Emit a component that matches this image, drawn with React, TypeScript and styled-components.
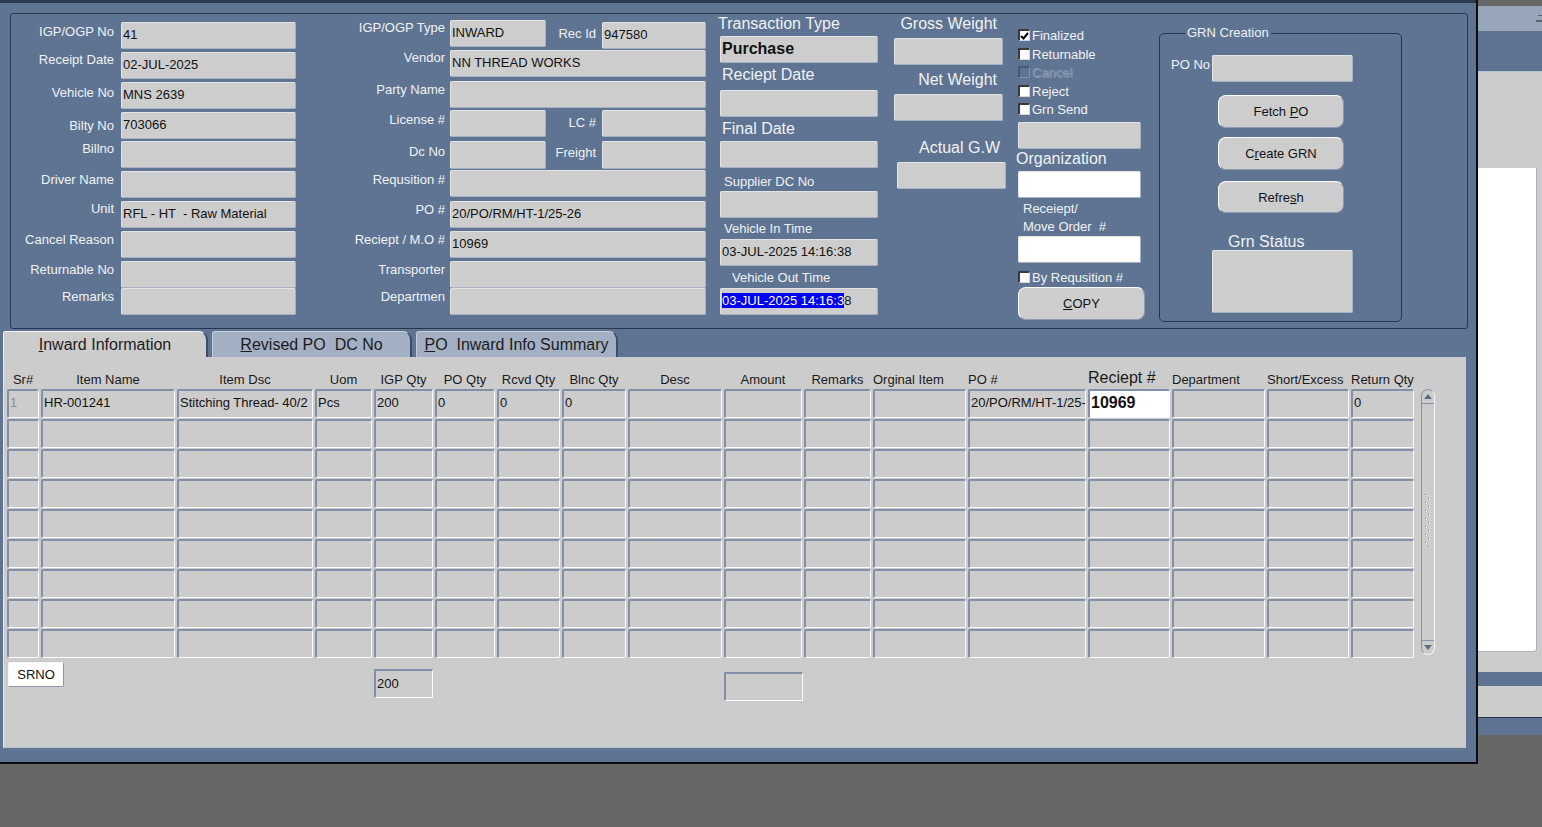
import React from 'react';
import styled, { createGlobalStyle } from 'styled-components';

const BLUE = '#5f7493';
const GRAY = '#cccccc';
const INK = '#121212';
const LIGHT = '#f1f2f4';

const GlobalStyle = createGlobalStyle`
  html, body { margin: 0; padding: 0; background: #676767; }
  body { font-family: 'Liberation Sans', Arial, sans-serif; font-size: 13px; overflow: hidden; }
  * { box-sizing: border-box; }
`;

const leftRows = [
  { label: 'IGP/OGP No', value: '41', h: 30, dy: 2 },
  { label: 'Receipt Date', value: '02-JUL-2025', h: 30, dy: 0 },
  { label: 'Vehicle No', value: 'MNS 2639', h: 30, dy: 3 },
  { label: 'Bilty No', value: '703066', h: 29, dy: 6 },
  { label: 'Billno', value: '', h: 30, dy: 0 },
  { label: 'Driver Name', value: '', h: 30, dy: 1 },
  { label: 'Unit', value: 'RFL - HT  - Raw Material', h: 30, dy: 0 },
  { label: 'Cancel Reason', value: '', h: 30, dy: 1 },
  { label: 'Returnable No', value: '', h: 27, dy: 1 },
  { label: 'Remarks', value: '', h: 28, dy: 1 },
];

const midRows = [
  { label: 'Requsition #', value: '', h: 31, dy: 2 },
  { label: 'PO #', value: '20/PO/RM/HT-1/25-26', h: 30, dy: 1 },
  { label: 'Reciept / M.O #', value: '10969', h: 30, dy: 1 },
  { label: 'Transporter', value: '', h: 27, dy: 1 },
  { label: 'Departmen', value: '', h: 28, dy: 1 },
];

const checks = [
  { label: 'Finalized', checked: true },
  { label: 'Returnable' },
  { label: 'Cancel', off: true },
  { label: 'Reject' },
  { label: 'Grn Send' },
];

type Col = { name: string; w: number; align: 'center' | 'left'; big?: boolean };

const cols: Col[] = [
  { name: 'Sr#', w: 34, align: 'center' },
  { name: 'Item Name', w: 136, align: 'center' },
  { name: 'Item Dsc', w: 138, align: 'center' },
  { name: 'Uom', w: 59, align: 'center' },
  { name: 'IGP Qty', w: 61, align: 'center' },
  { name: 'PO Qty', w: 62, align: 'center' },
  { name: 'Rcvd Qty', w: 65, align: 'center' },
  { name: 'Blnc Qty', w: 66, align: 'center' },
  { name: 'Desc', w: 96, align: 'center' },
  { name: 'Amount', w: 80, align: 'center' },
  { name: 'Remarks', w: 69, align: 'center' },
  { name: 'Orginal Item', w: 95, align: 'left' },
  { name: 'PO #', w: 120, align: 'left' },
  { name: 'Reciept #', w: 84, align: 'left', big: true },
  { name: 'Department', w: 95, align: 'left' },
  { name: 'Short/Excess', w: 84, align: 'left' },
  { name: 'Return Qty', w: 65, align: 'left' },
];

const firstRow = ['1', 'HR-001241', 'Stitching Thread- 40/2', 'Pcs', '200', '0', '0', '0', '', '', '', '', '20/PO/RM/HT-1/25-26', '10969', '', '', '0'];
const RECEIPT_COL = 13;
const template = cols.map((c) => `${c.w}px`).join(' ');

const Screen = styled.div`
  display: flex;
  width: 1542px;
  height: 827px;
  background: #676767;
`;

const Window = styled.div`
  width: 1478px;
  height: 764px;
  flex-shrink: 0;
  display: flex;
  flex-direction: column;
  background: ${BLUE};
  border-right: 2px solid #0c0c0c;
  border-bottom: 2px solid #0c0c0c;
`;

const TitleStrip = styled.div`
  height: 3px;
  background: #2c3a51;
`;

const TopFrame = styled.div`
  margin: 10px 0 0 10px;
  width: 1458px;
  height: 316px;
  flex-shrink: 0;
  display: flex;
  align-items: flex-start;
  border: 1px solid #27364f;
  border-radius: 3px;
`;

const Column = styled.div<{ $w: number; $ml?: number; $pt?: number; $pl?: number }>`
  width: ${(p) => p.$w}px;
  margin-left: ${(p) => p.$ml ?? 0}px;
  padding-top: ${(p) => p.$pt ?? 0}px;
  padding-left: ${(p) => p.$pl ?? 0}px;
  flex-shrink: 0;
  display: flex;
  flex-direction: column;
`;

const FormRow = styled.div<{ $h: number }>`
  height: ${(p) => p.$h}px;
  display: flex;
  align-items: flex-start;
`;

const Label = styled.div<{ $w: number; $dy?: number; $gap?: number }>`
  width: ${(p) => p.$w}px;
  margin-right: ${(p) => p.$gap ?? 0}px;
  padding-top: ${(p) => p.$dy ?? 1}px;
  flex-shrink: 0;
  text-align: right;
  color: ${LIGHT};
  font-size: 13px;
  line-height: 16px;
  white-space: nowrap;
`;

const TopLabel = styled.div<{ $h: number; $pt: number; $size?: number; $lh?: number; $indent?: number; $right?: number }>`
  height: ${(p) => p.$h}px;
  padding-top: ${(p) => p.$pt}px;
  padding-left: ${(p) => p.$indent ?? 0}px;
  padding-right: ${(p) => p.$right ?? 0}px;
  text-align: ${(p) => (p.$right !== undefined ? 'right' : 'left')};
  color: ${LIGHT};
  font-size: ${(p) => p.$size ?? 16}px;
  line-height: ${(p) => p.$lh ?? ((p.$size ?? 16) === 13 ? 16 : 18)}px;
  white-space: pre;
  flex-shrink: 0;
`;

const Field = styled.div<{ $w: number; $h?: number; $white?: boolean; $big?: boolean; $mt?: number; $ml?: number }>`
  width: ${(p) => p.$w}px;
  height: ${(p) => p.$h ?? 27}px;
  margin-top: ${(p) => p.$mt ?? 0}px;
  margin-left: ${(p) => p.$ml ?? 0}px;
  flex-shrink: 0;
  background: ${(p) => (p.$white ? '#ffffff' : '#cdcdcd')};
  border: 1px solid;
  border-color: #e3e3e3 #a6b1c1 #a6b1c1 #e3e3e3;
  border-radius: 2px;
  padding: ${(p) => (p.$big ? '3px 1px 0' : '4px 1px 0')};
  font-size: ${(p) => (p.$big ? 16 : 13)}px;
  font-weight: ${(p) => (p.$big ? 700 : 400)};
  line-height: ${(p) => (p.$big ? 18 : 16)}px;
  color: ${INK};
  white-space: pre;
  overflow: hidden;
`;

const Selected = styled.span`
  background: #0000f2;
  color: #ffffff;
`;

const CheckRow = styled.div<{ $h: number; $mt?: number }>`
  height: ${(p) => p.$h}px;
  margin-top: ${(p) => p.$mt ?? 0}px;
  padding-left: 2px;
  display: flex;
  align-items: flex-start;
  font-size: 13px;
  line-height: 16px;
`;

const Box = styled.span<{ $off?: boolean }>`
  width: 12px;
  height: 12px;
  margin: 1px 2px 0 0;
  flex-shrink: 0;
  display: flex;
  align-items: center;
  justify-content: center;
  background: ${(p) => (p.$off ? 'transparent' : '#ffffff')};
  border: 1px solid;
  border-width: 2px 1px 1px 2px;
  border-color: ${(p) => (p.$off ? '#475877 #8393aa #8393aa #475877' : '#3a3a3a #d6d6d6 #d6d6d6 #3a3a3a')};
`;

const CheckText = styled.span<{ $off?: boolean }>`
  color: ${(p) => (p.$off ? '#8796ad' : LIGHT)};
  text-shadow: ${(p) => (p.$off ? '1px 1px 0 rgba(255,255,255,0.22)' : 'none')};
`;

const Button = styled.div<{ $w: number; $h: number; $mt?: number; $ml?: number }>`
  width: ${(p) => p.$w}px;
  height: ${(p) => p.$h}px;
  margin-top: ${(p) => p.$mt ?? 0}px;
  margin-left: ${(p) => p.$ml ?? 0}px;
  flex-shrink: 0;
  display: flex;
  align-items: center;
  justify-content: center;
  background: #cdcdcd;
  border: 1px solid;
  border-color: #ffffff #8e9bb0 #8e9bb0 #ffffff;
  border-radius: 8px;
  color: ${INK};
  font-size: 13px;
`;

const GrnBox = styled.div`
  position: relative;
  margin: 19px 0 0 13px;
  width: 243px;
  height: 289px;
  flex-shrink: 0;
  padding: 21px 0 0 11px;
  display: flex;
  flex-direction: column;
  border: 1px solid #27364f;
  border-radius: 5px;
`;

const Legend = styled.span`
  position: absolute;
  top: -9px;
  left: 25px;
  padding: 0 2px;
  background: ${BLUE};
  color: ${LIGHT};
  font-size: 13px;
  line-height: 16px;
`;

const TabBar = styled.div`
  margin: 2px 0 0 3px;
  height: 26px;
  display: flex;
`;

const Tab = styled.div<{ $w: number; $active?: boolean }>`
  width: ${(p) => p.$w}px;
  height: 26px;
  margin-right: 4px;
  padding-top: 4px;
  background: ${(p) => (p.$active ? GRAY : '#a3b0c3')};
  border-top: 1px solid ${(p) => (p.$active ? '#f2f2f2' : '#c4ccd8')};
  border-left: 1px solid ${(p) => (p.$active ? '#f2f2f2' : '#c4ccd8')};
  border-right: 2px solid #3c4d68;
  border-radius: 3px 9px 0 0;
  text-align: center;
  color: #1c1c1c;
  font-size: 16px;
  line-height: 18px;
  white-space: pre;
`;

const Panel = styled.div`
  margin-left: 3px;
  width: 1463px;
  height: 391px;
  flex-shrink: 0;
  padding: 13px 0 0 3px;
  background: ${GRAY};
  border-left: 1px solid #e8e8e8;
  border-bottom: 1px solid #b9c1cd;
`;

const HeadGrid = styled.div`
  display: grid;
  grid-template-columns: ${template};
  height: 19px;
`;

const HeadCell = styled.div<{ $align: string; $big?: boolean }>`
  width: calc(100% - 2px);
  padding-top: ${(p) => (p.$big ? 0 : 2)}px;
  text-align: ${(p) => p.$align};
  font-size: ${(p) => (p.$big ? 16 : 13)}px;
  line-height: 16px;
  color: #1a1a1a;
  white-space: nowrap;
`;

const BodyRow = styled.div`
  display: flex;
  align-items: flex-start;
`;

const Grid = styled.div`
  display: grid;
  grid-template-columns: ${template};
  grid-auto-rows: 29px;
  row-gap: 1px;
`;

const Cell = styled.div<{ $white?: boolean; $bold?: boolean; $muted?: boolean }>`
  width: calc(100% - 2px);
  height: 29px;
  background: ${(p) => (p.$white ? '#ffffff' : GRAY)};
  border-style: solid;
  border-width: 2px 1px 1px 2px;
  border-color: #8190a7 #fdfdfd #fdfdfd #8190a7;
  border-radius: 2px;
  padding: ${(p) => (p.$bold ? '3px 1px 0' : '4px 1px 0')};
  font-size: ${(p) => (p.$bold ? 16 : 13)}px;
  font-weight: ${(p) => (p.$bold ? 700 : 400)};
  line-height: ${(p) => (p.$bold ? 18 : 16)}px;
  color: ${(p) => (p.$muted ? '#8c8c8c' : INK)};
  white-space: nowrap;
  overflow: hidden;
`;

const Scroll = styled.div`
  margin-left: 5px;
  width: 14px;
  height: 266px;
  display: flex;
  flex-direction: column;
  border: 1px solid;
  border-color: #8593a8 #f6f6f6 #f6f6f6 #8593a8;
  border-radius: 7px;
`;

const ScrollCap = styled.div<{ $bottom?: boolean }>`
  height: 14px;
  display: flex;
  align-items: center;
  justify-content: center;
  border-${(p) => (p.$bottom ? 'top' : 'bottom')}: 1px solid #8593a8;
`;

const Track = styled.div`
  flex: 1;
  display: flex;
  align-items: center;
  justify-content: center;
`;

const Footer = styled.div`
  display: grid;
  grid-template-columns: ${template};
  align-items: start;
  margin-top: 4px;
`;

const SrnoButton = styled.div`
  grid-column: 1 / span 3;
  margin-left: 1px;
  width: 56px;
  height: 25px;
  background: #ffffff;
  border: 1px solid;
  border-color: #f4f4f4 #8a97ab #8a97ab #f4f4f4;
  border-radius: 2px;
  text-align: center;
  line-height: 23px;
  font-size: 13px;
  color: ${INK};
`;

const SumBox = styled.div<{ $col: number; $w: number; $mt: number }>`
  grid-column: ${(p) => p.$col};
  width: ${(p) => p.$w}px;
  height: 29px;
  margin-top: ${(p) => p.$mt}px;
  border-style: solid;
  border-width: 2px 1px 1px 2px;
  border-color: #8190a7 #fdfdfd #fdfdfd #8190a7;
  padding: 5px 1px 0;
  font-size: 13px;
  line-height: 16px;
  color: ${INK};
`;

const Side = styled.div`
  flex: 1;
  display: flex;
  flex-direction: column;
`;

const SideBand = styled.div<{ $h: number; $bg: string; $line?: boolean }>`
  height: ${(p) => p.$h}px;
  flex-shrink: 0;
  background: ${(p) => p.$bg};
  border-bottom: ${(p) => (p.$line ? '1px solid #26344b' : 'none')};
`;

const SideTitle = styled.div`
  height: 25px;
  flex-shrink: 0;
  display: flex;
  align-items: center;
  justify-content: flex-end;
  background: #98a6ba;
`;

const SideCanvas = styled.div`
  height: 601px;
  flex-shrink: 0;
  padding: 96px 5px 20px 0;
  background: ${GRAY};
  border-top: 1px solid #b8c2d0;
`;

const SideSheet = styled.div`
  height: 100%;
  background: #ffffff;
  border-right: 1px solid #a9b0ba;
  border-bottom: 1px solid #a9b0ba;
  border-radius: 0 0 3px 0;
`;

const Check = ({ label, checked, off }: { label: string; checked?: boolean; off?: boolean }) => (
  <>
    <Box $off={off}>
      {checked && (
        <svg width="9" height="8" viewBox="0 0 9 8">
          <path d="M1 4 L3.5 6.5 L8 1" stroke="#000" strokeWidth="2" fill="none" />
        </svg>
      )}
    </Box>
    <CheckText $off={off}>{label}</CheckText>
  </>
);

const Arrow = ({ down }: { down?: boolean }) => (
  <svg width="8" height="5" viewBox="0 0 8 5">
    <path d={down ? 'M0 0 H8 L4 5 Z' : 'M0 5 H8 L4 0 Z'} fill="#5c6c86" />
  </svg>
);

const Grip = () => (
  <svg width="8" height="56" viewBox="0 0 8 56">
    {Array.from({ length: 14 }).map((_, i) => (
      <g key={i}>
        <rect x={i % 2 ? 4 : 1} y={i * 4} width="1" height="1" fill="#7d8aa0" />
        <rect x={i % 2 ? 5 : 2} y={i * 4 + 1} width="1" height="1" fill="#ffffff" />
      </g>
    ))}
  </svg>
);

const App: React.FC = () => (
  <Screen>
    <GlobalStyle />
    <Window>
      <TitleStrip />
      <TopFrame>
        <Column $w={285} $pt={8} $pl={3}>
          {leftRows.map((r) => (
            <FormRow key={r.label} $h={r.h}>
              <Label $w={100} $gap={7} $dy={r.dy}>{r.label}</Label>
              <Field $w={175}>{r.value}</Field>
            </FormRow>
          ))}
        </Column>

        <Column $w={410} $pt={6}>
          <FormRow $h={30}>
            <Label $w={149} $gap={5} $dy={0}>IGP/OGP Type</Label>
            <Field $w={96}>INWARD</Field>
            <Label $w={50} $gap={6} $dy={6}>Rec Id</Label>
            <Field $w={104} $mt={2}>947580</Field>
          </FormRow>
          <FormRow $h={31}>
            <Label $w={149} $gap={5} $dy={0}>Vendor</Label>
            <Field $w={256}>NN THREAD WORKS</Field>
          </FormRow>
          <FormRow $h={29}>
            <Label $w={149} $gap={5} $dy={1}>Party Name</Label>
            <Field $w={256} />
          </FormRow>
          <FormRow $h={31}>
            <Label $w={149} $gap={5} $dy={2}>License #</Label>
            <Field $w={96} />
            <Label $w={50} $gap={6} $dy={5}>LC #</Label>
            <Field $w={104} />
          </FormRow>
          <FormRow $h={29}>
            <Label $w={149} $gap={5} $dy={3}>Dc No</Label>
            <Field $w={96} $h={28} />
            <Label $w={50} $gap={6} $dy={4}>Freight</Label>
            <Field $w={104} $h={28} />
          </FormRow>
          {midRows.map((r) => (
            <FormRow key={r.label} $h={r.h}>
              <Label $w={149} $gap={5} $dy={r.dy}>{r.label}</Label>
              <Field $w={256}>{r.value}</Field>
            </FormRow>
          ))}
        </Column>

        <Column $w={160} $ml={12}>
          <TopLabel $h={22} $pt={1}>Transaction Type</TopLabel>
          <Field $w={158} $ml={2} $big>Purchase</Field>
          <TopLabel $h={27} $pt={3} $indent={4}>Reciept Date</TopLabel>
          <Field $w={158} $ml={2} />
          <TopLabel $h={24} $pt={3} $indent={4}>Final Date</TopLabel>
          <Field $w={158} $ml={2} />
          <TopLabel $h={23} $pt={6} $indent={6} $size={13}>Supplier DC No</TopLabel>
          <Field $w={158} $ml={2} />
          <TopLabel $h={21} $pt={3} $indent={6} $size={13}>Vehicle In Time</TopLabel>
          <Field $w={158} $ml={2}>03-JUL-2025 14:16:38</Field>
          <TopLabel $h={22} $pt={4} $indent={14} $size={13}>Vehicle Out Time</TopLabel>
          <Field $w={158} $ml={2}>
            <Selected>03-JUL-2025 14:16:3</Selected>8
          </Field>
        </Column>

        <Column $w={112} $ml={16}>
          <TopLabel $h={24} $pt={1} $right={9}>Gross Weight</TopLabel>
          <Field $w={109} />
          <TopLabel $h={29} $pt={6} $right={9}>Net Weight</TopLabel>
          <Field $w={109} />
          <TopLabel $h={41} $pt={18} $right={6}>Actual G.W</TopLabel>
          <Field $w={109} $ml={3} />
        </Column>

        <Column $w={130} $ml={10} $pt={14}>
          {checks.map((c) => (
            <CheckRow key={c.label} $h={18.5}>
              <Check {...c} />
            </CheckRow>
          ))}
          <Field $w={123} $ml={2} $mt={1.5} />
          <TopLabel $h={22} $pt={1}>Organization</TopLabel>
          <Field $w={123} $ml={2} $white />
          <TopLabel $h={38} $pt={2} $indent={7} $size={13} $lh={18}>{'Receiept/\nMove Order  #'}</TopLabel>
          <Field $w={123} $ml={2} $white />
          <CheckRow $h={16} $mt={7}>
            <Check label="By Requsition #" />
          </CheckRow>
          <Button $w={127} $h={33} $mt={1} $ml={2}>
            <u>C</u>OPY
          </Button>
        </Column>

        <GrnBox>
          <Legend>GRN Creation</Legend>
          <FormRow $h={27}>
            <Label $w={38} $gap={3} $dy={2}>PO No</Label>
            <Field $w={141} />
          </FormRow>
          <Button $w={126} $h={33} $mt={13} $ml={47}>
            Fetch&nbsp;<u>P</u>O
          </Button>
          <Button $w={126} $h={33} $mt={9} $ml={47}>
            C<u>r</u>eate GRN
          </Button>
          <Button $w={126} $h={32} $mt={11} $ml={47}>
            Refre<u>s</u>h
          </Button>
          <TopLabel $h={37} $pt={20} $indent={57}>Grn Status</TopLabel>
          <Field $w={141} $h={63} $ml={41} />
        </GrnBox>
      </TopFrame>

      <TabBar>
        <Tab $w={205} $active>
          <u>I</u>nward Information
        </Tab>
        <Tab $w={200}>
          <u>R</u>evised PO{'  '}DC No
        </Tab>
        <Tab $w={202}>
          <u>P</u>O{'  '}Inward Info Summary
        </Tab>
      </TabBar>

      <Panel>
        <HeadGrid>
          {cols.map((c) => (
            <HeadCell key={c.name} $align={c.align} $big={c.big}>
              {c.name}
            </HeadCell>
          ))}
        </HeadGrid>
        <BodyRow>
          <Grid>
            {Array.from({ length: 9 }).map((_, r) =>
              cols.map((c, i) => (
                <Cell
                  key={`${r}-${c.name}`}
                  $white={r === 0 && i === RECEIPT_COL}
                  $bold={r === 0 && i === RECEIPT_COL}
                  $muted={i === 0}
                >
                  {r === 0 ? firstRow[i] : ''}
                </Cell>
              ))
            )}
          </Grid>
          <Scroll>
            <ScrollCap>
              <Arrow />
            </ScrollCap>
            <Track>
              <Grip />
            </Track>
            <ScrollCap $bottom>
              <Arrow down />
            </ScrollCap>
          </Scroll>
        </BodyRow>
        <Footer>
          <SrnoButton>SRNO</SrnoButton>
          <SumBox $col={5} $w={59} $mt={7}>200</SumBox>
          <SumBox $col={10} $w={79} $mt={10} />
        </Footer>
      </Panel>
    </Window>

    <Side>
      <SideBand $h={6} $bg="#676767" />
      <SideTitle>
        <svg width="6" height="10" viewBox="0 0 6 10">
          <rect x="2" y="1" width="4" height="1" fill="#59626f" />
          <rect x="0" y="6" width="6" height="2" fill="#59626f" />
        </svg>
      </SideTitle>
      <SideBand $h={40} $bg={BLUE} />
      <SideCanvas>
        <SideSheet />
      </SideCanvas>
      <SideBand $h={14} $bg={BLUE} />
      <SideBand $h={32} $bg={GRAY} $line />
      <SideBand $h={17} $bg={BLUE} />
    </Side>
  </Screen>
);

export default App;
